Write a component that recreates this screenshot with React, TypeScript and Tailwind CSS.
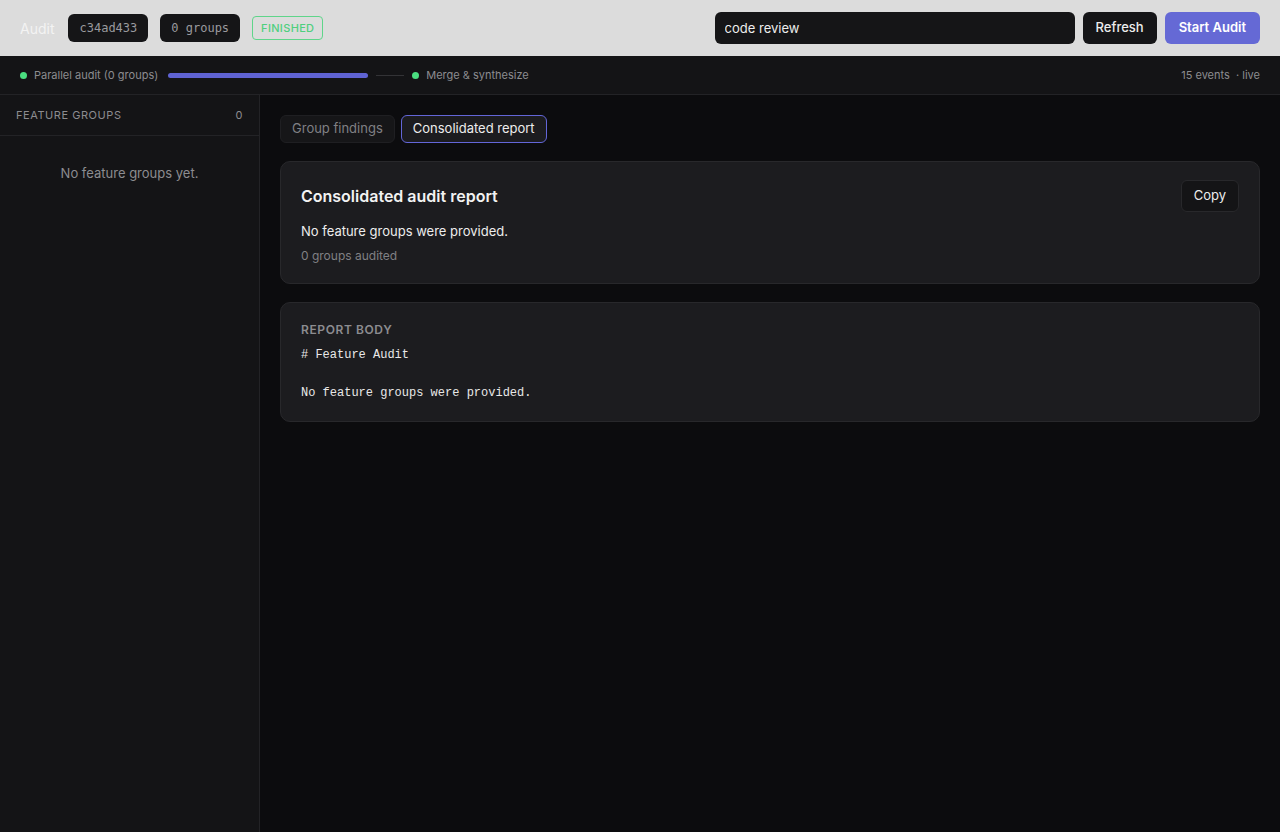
import { useState } from "react";

const REPORT = `# Feature Audit

No feature groups were provided.`;

function Badge({ children }: { children: React.ReactNode }) {
  return (
    <span className="flex h-7 items-center rounded-md bg-[#151517] px-[11px] font-['DejaVu_Sans_Mono',monospace] text-[12px] text-[#9a9a9e]">
      {children}
    </span>
  );
}

export default function App() {
  const [tab, setTab] = useState<"groups" | "report">("report");
  const [task, setTask] = useState("code review");

  return (
    <div className="flex h-[832px] flex-col bg-[#0c0c0e] font-['Inter',sans-serif] text-white">
      {/* Top bar */}
      <header className="flex h-14 shrink-0 items-center bg-[#dcdcdc] px-5">
        <span className="mr-[14px] text-[14px] text-[#f3f3f3]">Audit</span>
        <div className="flex items-center gap-3">
          <Badge>c34ad433</Badge>
          <Badge>0 groups</Badge>
          <span className="flex h-6 items-center rounded border border-[#5fd58a] px-2 text-[11px] font-medium tracking-[0.03em] text-[#4fcf7e]">
            FINISHED
          </span>
        </div>
        <div className="ml-auto flex items-center gap-2">
          <input
            value={task}
            onChange={(e) => setTask(e.target.value)}
            className="h-8 w-[360px] rounded-md bg-[#151517] px-[10px] text-[13px] text-[#ededed] outline-none"
          />
          <button className="h-8 rounded-md bg-[#151517] px-[13px] text-[13px] font-medium text-[#ededed]">
            Refresh
          </button>
          <button className="h-8 rounded-md bg-[#6569d5] px-[14px] text-[13px] font-semibold text-white">
            Start Audit
          </button>
        </div>
      </header>

      {/* Pipeline progress */}
      <div className="flex h-[39px] shrink-0 items-center border-b border-[#232326] bg-[#141416] px-5 text-[11px] text-[#8c8c90]">
        <span className="mr-[7px] h-[7px] w-[7px] rounded-full bg-[#4ade80]" />
        <span>Parallel audit (0 groups)</span>
        <div className="ml-[10px] h-[5px] w-[200px] rounded-full bg-[#5f63d3]" />
        <div className="mx-2 h-px w-7 bg-[#333336]" />
        <span className="mr-[7px] h-[7px] w-[7px] rounded-full bg-[#4ade80]" />
        <span>Merge &amp; synthesize</span>
        <span className="ml-auto">15 events&nbsp; · live</span>
      </div>

      <div className="flex min-h-0 flex-1">
        {/* Sidebar */}
        <aside className="w-[260px] shrink-0 border-r border-[#232326] bg-[#141416]">
          <div className="flex h-[41px] items-center justify-between border-b border-[#232326] px-4 text-[11px] tracking-[0.05em] text-[#8c8c90]">
            <span>FEATURE GROUPS</span>
            <span>0</span>
          </div>
          <p className="pt-7 text-center text-[13px] text-[#8c8c90]">No feature groups yet.</p>
        </aside>

        {/* Main */}
        <main className="flex-1 px-5 pt-5">
          <div className="flex gap-[6px]">
            <button
              onClick={() => setTab("groups")}
              className={`h-7 rounded-md border px-[11px] text-[13px] ${tab === "groups" ? "border-[#6366d8] bg-[#1c1c1f] text-[#ededed]" : "border-[#1f1f22] bg-[#161618] text-[#808084]"}`}
            >
              Group findings
            </button>
            <button
              onClick={() => setTab("report")}
              className={`h-7 rounded-md border px-[11px] text-[13px] ${tab === "report" ? "border-[#6366d8] bg-[#1c1c1f] text-[#ededed]" : "border-[#1f1f22] bg-[#161618] text-[#808084]"}`}
            >
              Consolidated report
            </button>
          </div>

          <section className="mt-[18px] flex items-start justify-between rounded-[10px] border border-[#28282b] bg-[#1c1c1f] px-5 pb-[18px] pt-6">
            <div>
              <h2 className="text-[16px] font-semibold leading-5 text-[#f2f2f2]">Consolidated audit report</h2>
              <p className="mt-4 text-[13px] text-[#ededed]">No feature groups were provided.</p>
              <p className="mt-[5px] text-[12px] text-[#808084]">0 groups audited</p>
            </div>
            <button className="-mt-[6px] h-8 rounded-md border border-[#28282b] bg-[#141416] px-3 text-[13px] text-[#ededed]">
              Copy
            </button>
          </section>

          <section className="mt-[18px] rounded-[10px] border border-[#28282b] bg-[#1c1c1f] px-5 pb-[18px] pt-[18px]">
            <p className="text-[12px] font-semibold tracking-[0.05em] text-[#8c8c90]">REPORT BODY</p>
            <pre className="mt-[7px] font-['Liberation_Mono',monospace] text-[12px] leading-[19px] text-[#e8e8e8]">{REPORT}</pre>
          </section>
        </main>
      </div>
    </div>
  );
}
